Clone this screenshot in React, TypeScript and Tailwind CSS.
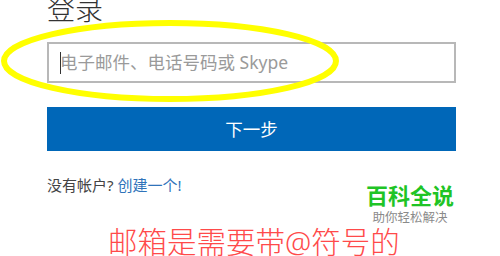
export default function App() {
  return (
    <div
      className="relative h-[256px] w-[500px] overflow-hidden bg-white"
      style={{ fontFamily: '"Noto Sans", "Noto Sans CJK SC", sans-serif' }}
    >
      <div className="flex flex-col pl-[47px] pr-[44px]">
        <h1 className="mt-[-8px] h-[34px] text-[28px] leading-[34px] font-light text-[#333]">登录</h1>

        {/* Email input */}
        <div className="mt-[16px] flex h-[41px] items-center border-2 border-[#b8b8b8] pl-[11px]">
          <span className="h-[22px] w-px bg-[#333]" />
          <span className="ml-[-1px] text-[17.5px] text-[#9a9a9a]">电子邮件、电话号码或 Skype</span>
        </div>

        <button className="mt-[24px] flex h-[44px] items-center justify-center bg-[#0067b8] text-[17.5px] text-white">
          下一步
        </button>

        <div className="mt-[24px] flex items-start justify-between pr-[2px]">
          <div className="text-[15px] leading-[20px] text-[#444]">
            没有帐户? <span className="text-[#2f73ba]">创建一个!</span>
          </div>
          <div className="mt-[7px] flex flex-col items-center">
            <span className="text-[22px] leading-[26px] font-bold text-[#1fc426]">百科全说</span>
            <span className="mt-[3px] text-[12.5px] leading-[14px] text-[#8a8a8a]">助你轻松解决</span>
          </div>
        </div>

        <div className="mt-[2px] pl-[61px] text-[29.5px] leading-[30px] font-light text-[#ff4a4a]">
          邮箱是需要带@符号的
        </div>
      </div>

      {/* Yellow annotation ellipse */}
      <svg className="pointer-events-none absolute left-0 top-0" width="500" height="256">
        <ellipse cx="170" cy="61" rx="166" ry="38" fill="none" stroke="#ffff00" strokeWidth="6" />
      </svg>
    </div>
  );
}
